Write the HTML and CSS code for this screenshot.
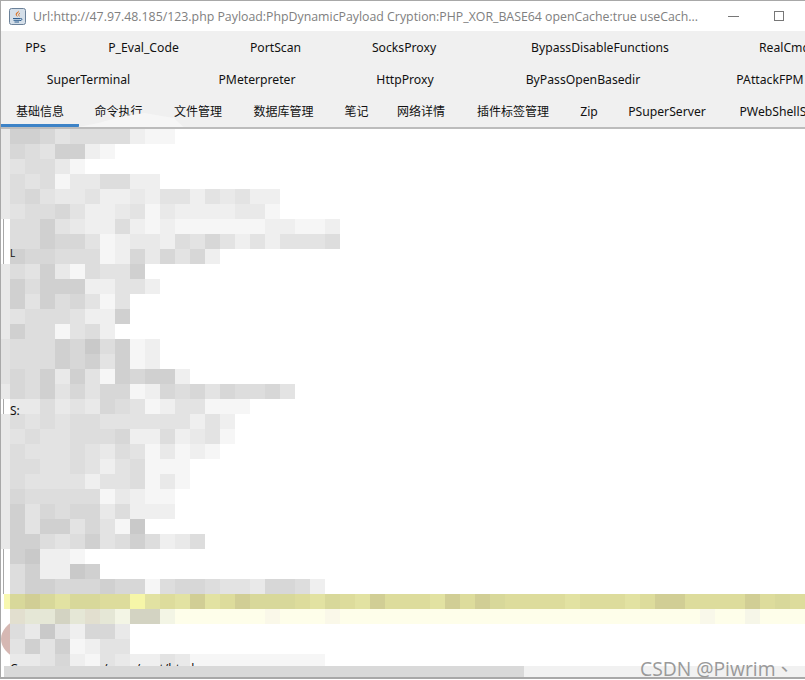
FILE: index.html
```html
<!DOCTYPE html>
<html lang="en">
<head>
    <meta charset="UTF-8">
    <title>Godzilla shell</title>
    <link rel="stylesheet" href="styles.css">
</head>
<body>
    <div class="window">
        <div class="title-bar">
            <svg class="java-icon" width="17" height="17" viewBox="0 0 17 17">
                <rect x="0.5" y="0.5" width="16" height="16" rx="2" fill="#d5dfe9" stroke="#6b8199"/>
                <path d="M9.5 2.5 C11 4.5 7 5.5 8 7.5 C8.4 8.4 9 8.6 9 9 C7 7.8 6 6.5 7 5.2 C7.8 4.2 9.6 3.8 9.5 2.5 Z" fill="#d9772b"/>
                <path d="M11 5 C9.5 6 9.2 6.8 10.4 8.4" fill="none" stroke="#d9772b"/>
                <path d="M4 10.5 H11.5 M4.5 12.3 H11 M5.5 14 H10 M11.5 10.5 C13.5 10 13.5 12.5 11 12.6" fill="none" stroke="#2f5f90"/>
            </svg>
            <div class="title-text">Url:http://47.97.48.185/123.php Payload:PhpDynamicPayload Cryption:PHP_XOR_BASE64 openCache:true useCach...</div>
            <div class="win-btn"><span class="win-min"></span></div>
            <div class="win-btn"><span class="win-max"></span></div>
        </div>

        <div class="tabs">
            <div class="tab-row row-one">
                <div class="tab">PPs</div>
                <div class="tab">P_Eval_Code</div>
                <div class="tab">PortScan</div>
                <div class="tab">SocksProxy</div>
                <div class="tab">BypassDisableFunctions</div>
                <div class="tab">RealCmd</div>
            </div>
            <div class="tab-row row-two">
                <div class="tab">SuperTerminal</div>
                <div class="tab">PMeterpreter</div>
                <div class="tab">HttpProxy</div>
                <div class="tab">ByPassOpenBasedir</div>
                <div class="tab">PAttackFPM</div>
            </div>
            <div class="tab-row row-three">
                <div class="tab zh active">基础信息</div>
                <div class="tab zh">命令执行</div>
                <div class="tab zh">文件管理</div>
                <div class="tab zh">数据库管理</div>
                <div class="tab zh">笔记</div>
                <div class="tab zh">网络详情</div>
                <div class="tab zh">插件标签管理</div>
                <div class="tab">Zip</div>
                <div class="tab">PSuperServer</div>
                <div class="tab">PWebShellScan</div>
            </div>
        </div>
        <div class="smudge"></div>

        <div class="content">
            <div class="blush"></div>
            <div class="mosaic">
                <div class="m"><i class="edge"></i><i class="g"></i><i class="g"></i><i class="f"></i><i class="d"></i><i class="e"></i><i class="e"></i><i class="e"></i><i class="e"></i><i class="b"></i><i class="a"></i><i class="a"></i></div>
                <div class="m"><i class="edge"></i><i class="f"></i><i class="e"></i><i class="d"></i><i class="g"></i><i class="g"></i><i class="b"></i><i class="a"></i></div>
                <div class="m"><i class="edge"></i><i class="d"></i><i class="e"></i><i class="e"></i><i class="c"></i><i class="a"></i></div>
                <div class="m"><i class="edge"></i><i class="e"></i><i class="d"></i><i class="e"></i><i class="a"></i><i class="c"></i><i class="c"></i><i class="e"></i><i class="e"></i><i class="b"></i><i class="b"></i></div>
                <div class="m"><i class="edge"></i><i class="e"></i><i class="f"></i><i class="d"></i><i class="c"></i><i class="c"></i><i class="d"></i><i class="b"></i><i class="b"></i><i class="c"></i><i class="b"></i><i class="d"></i><i class="d"></i><i class="b"></i><i class="d"></i><i class="c"></i><i class="d"></i><i class="b"></i><i class="b"></i></div>
                <div class="m"><i class="edge"></i><i class="d"></i><i class="e"></i><i class="e"></i><i class="f"></i><i class="d"></i><i class="b"></i><i class="b"></i><i class="c"></i><i class="d"></i><i class="a"></i><i class="c"></i><i class="b"></i><i class="b"></i><i class="b"></i><i class="b"></i><i class="c"></i><i class="c"></i><i class="a"></i></div>
                <div class="m"><i class="edge-white"></i><i class="e"></i><i class="e"></i><i class="g"></i><i class="d"></i><i class="c"></i><i class="b"></i><i class="b"></i><i class="e"></i><i class="b"></i><i class="a"></i><i class="b"></i><i class="a"></i><i class="a"></i><i class="a"></i><i class="a"></i><i class="a"></i><i class="a"></i><i class="b"></i><i class="b"></i><i class="a"></i><i class="a"></i><i class="b"></i></div>
                <div class="m"><i class="edge-white"></i><i class="e"></i><i class="e"></i><i class="g"></i><i class="f"></i><i class="f"></i><i class="d"></i><i class="a"></i><i class="b"></i><i class="c"></i><i class="c"></i><i class="b"></i><i class="e"></i><i class="d"></i><i class="f"></i><i class="d"></i><i class="b"></i><i class="d"></i><i class="b"></i><i class="d"></i><i class="d"></i><i class="d"></i><i class="e"></i></div>
                <div class="m"><i class="edge-white"></i><i class="g"></i><i class="f"></i><i class="f"></i><i class="e"></i><i class="e"></i><i class="e"></i><i class="a"></i><i class="b"></i><i class="f"></i><i class="c"></i><i class="f"></i><i class="d"></i><i class="f"></i><i class="b"></i></div>
                <div class="m"><i class="edge"></i><i class="e"></i><i class="d"></i><i class="g"></i><i class="c"></i><i class="a"></i><i class="e"></i><i class="d"></i><i class="d"></i><i class="g"></i></div>
                <div class="m"><i class="edge"></i><i class="g"></i><i class="e"></i><i class="g"></i><i class="g"></i><i class="g"></i><i class="b"></i><i class="b"></i><i class="d"></i><i class="d"></i><i class="b"></i></div>
                <div class="m"><i class="edge"></i><i class="g"></i><i class="d"></i><i class="g"></i><i class="e"></i><i class="f"></i><i class="d"></i><i class="a"></i><i class="d"></i></div>
                <div class="m"><i class="edge"></i><i class="d"></i><i class="e"></i><i class="e"></i><i class="e"></i><i class="d"></i><i class="b"></i><i class="b"></i><i class="g"></i></div>
                <div class="m"><i class="edge"></i><i class="g"></i><i class="e"></i><i class="e"></i><i class="a"></i><i class="d"></i><i class="e"></i><i class="b"></i></div>
                <div class="m"><i class="edge-dark"></i><i class="e"></i><i class="e"></i><i class="e"></i><i class="g"></i><i class="f"></i><i class="h"></i><i class="e"></i><i class="g"></i><i class="a"></i><i class="b"></i></div>
                <div class="m"><i class="edge-dark"></i><i class="e"></i><i class="e"></i><i class="e"></i><i class="g"></i><i class="f"></i><i class="g"></i><i class="d"></i><i class="g"></i><i class="a"></i><i class="b"></i></div>
                <div class="m"><i class="edge-dark"></i><i class="f"></i><i class="e"></i><i class="g"></i><i class="c"></i><i class="g"></i><i class="d"></i><i class="a"></i><i class="g"></i><i class="f"></i><i class="g"></i><i class="g"></i><i class="b"></i></div>
                <div class="m"><i class="edge"></i><i class="f"></i><i class="e"></i><i class="g"></i><i class="d"></i><i class="f"></i><i class="d"></i><i class="f"></i><i class="f"></i><i class="a"></i><i class="b"></i><i class="f"></i><i class="e"></i><i class="f"></i><i class="d"></i><i class="f"></i><i class="e"></i><i class="e"></i><i class="f"></i><i class="d"></i></div>
                <div class="m"><i class="edge-white"></i><i class="c"></i><i class="c"></i><i class="e"></i><i class="c"></i><i class="d"></i><i class="c"></i><i class="f"></i><i class="e"></i><i class="d"></i><i class="a"></i><i class="b"></i><i class="d"></i><i class="d"></i><i class="a"></i><i class="a"></i><i class="a"></i></div>
                <div class="m"><i class="edge"></i><i class="e"></i><i class="d"></i><i class="e"></i><i class="d"></i><i class="e"></i><i class="e"></i><i class="d"></i><i class="d"></i><i class="d"></i><i class="d"></i><i class="d"></i><i class="d"></i><i class="b"></i><i class="d"></i><i class="b"></i></div>
                <div class="m"><i class="edge"></i><i class="d"></i><i class="e"></i><i class="d"></i><i class="d"></i><i class="e"></i><i class="e"></i><i class="e"></i><i class="f"></i><i class="b"></i><i class="b"></i><i class="e"></i><i class="b"></i><i class="c"></i><i class="d"></i><i class="a"></i></div>
                <div class="m"><i class="edge"></i><i class="e"></i><i class="d"></i><i class="d"></i><i class="d"></i><i class="e"></i><i class="d"></i><i class="c"></i><i class="e"></i><i class="d"></i><i class="a"></i><i class="c"></i><i class="a"></i><i class="b"></i><i class="a"></i></div>
                <div class="m"><i class="edge"></i><i class="e"></i><i class="e"></i><i class="d"></i><i class="d"></i><i class="e"></i><i class="d"></i><i class="b"></i><i class="d"></i><i class="e"></i><i class="a"></i><i class="a"></i><i class="a"></i></div>
                <div class="m"><i class="edge"></i><i class="e"></i><i class="d"></i><i class="d"></i><i class="d"></i><i class="d"></i><i class="b"></i><i class="d"></i><i class="d"></i><i class="e"></i><i class="a"></i><i class="c"></i><i class="a"></i></div>
                <div class="m"><i class="edge"></i><i class="f"></i><i class="e"></i><i class="e"></i><i class="e"></i><i class="e"></i><i class="e"></i><i class="a"></i><i class="c"></i><i class="b"></i><i class="a"></i><i class="a"></i></div>
                <div class="m"><i class="edge"></i><i class="g"></i><i class="d"></i><i class="f"></i><i class="e"></i><i class="f"></i><i class="f"></i><i class="c"></i><i class="e"></i><i class="b"></i><i class="b"></i><i class="b"></i></div>
                <div class="m"><i class="edge"></i><i class="g"></i><i class="d"></i><i class="g"></i><i class="g"></i><i class="d"></i><i class="f"></i><i class="d"></i><i class="a"></i><i class="h"></i></div>
                <div class="m"><i class="edge"></i><i class="g"></i><i class="g"></i><i class="e"></i><i class="d"></i><i class="e"></i><i class="g"></i><i class="d"></i><i class="e"></i><i class="g"></i><i class="e"></i><i class="b"></i><i class="c"></i><i class="e"></i></div>
                <div class="m"><i class="edge-white"></i><i class="g"></i><i class="h"></i><i class="b"></i><i class="b"></i><i class="a"></i></div>
                <div class="m"><i class="edge-white"></i><i class="e"></i><i class="g"></i><i class="b"></i><i class="b"></i><i class="h"></i><i class="g"></i></div>
                <div class="m"><i class="edge-white"></i><i class="e"></i><i class="g"></i><i class="g"></i><i class="f"></i><i class="f"></i><i class="f"></i><i class="g"></i><i class="f"></i><i class="f"></i><i class="a"></i><i class="e"></i><i class="f"></i><i class="f"></i><i class="e"></i><i class="d"></i><i class="d"></i><i class="c"></i><i class="f"></i><i class="f"></i><i class="e"></i><i class="b"></i></div>
                <div class="m"><i class="edge-yellow"></i><i class="y3"></i><i class="y4"></i><i class="y3"></i><i class="y2"></i><i class="y3"></i><i class="y3"></i><i class="y5"></i><i class="y5"></i><i class="y1"></i><i class="y2"></i><i class="y5"></i><i class="y2"></i><i class="y4"></i><i class="y2"></i><i class="y5"></i><i class="y4"></i><i class="y3"></i><i class="y3"></i><i class="y3"></i><i class="y5"></i><i class="y2"></i><i class="y3"></i><i class="y5"></i><i class="y2"></i><i class="y4"></i><i class="y5"></i><i class="y5"></i><i class="y5"></i><i class="y2"></i><i class="y4"></i><i class="y5"></i><i class="y4"></i><i class="y3"></i><i class="y5"></i><i class="y5"></i><i class="y5"></i><i class="y5"></i><i class="y2"></i><i class="y5"></i><i class="y5"></i><i class="y5"></i><i class="y2"></i><i class="y5"></i><i class="y4"></i><i class="y4"></i><i class="y5"></i><i class="y5"></i><i class="y5"></i><i class="y5"></i><i class="y4"></i><i class="y5"></i><i class="y3"></i><i class="y5"></i></div>
                <div class="m"><i class="edge-none"></i><i class="q1"></i><i class="q2"></i><i class="q2"></i><i class="q3"></i><i class="q2"></i><i class="q1"></i><i class="q2"></i><i class="q4"></i><i class="q3"></i><i class="q3"></i><i class="q4"></i><i class="pale-fill"></i></div>
                <div class="m"><i class="edge-none"></i><i class="e"></i><i class="c"></i><i class="h"></i><i class="d"></i><i class="b"></i><i class="f"></i><i class="f"></i><i class="c"></i></div>
                <div class="m"><i class="edge-none"></i><i class="d"></i><i class="g"></i><i class="d"></i><i class="g"></i><i class="a"></i><i class="b"></i><i class="d"></i><i class="d"></i></div>
                <div class="m"><i class="edge-none"></i><i class="c"></i><i class="c"></i><i class="d"></i><i class="f"></i><i class="b"></i><i class="a"></i><i class="d"></i><i class="c"></i><i class="b"></i><i class="b"></i><i class="d"></i><i class="c"></i><i class="a"></i><i class="a"></i><i class="a"></i><i class="a"></i><i class="a"></i><i class="a"></i><i class="a"></i><i class="a"></i><i class="a"></i></div>
            </div>
            <span class="frag frag-l">L</span>
            <span class="frag frag-s">S:</span>
            <span class="frag frag-cur">Cur</span>
            <span class="frag frag-path">/www/root/html</span>
        </div>

        <div class="hscroll"><div class="hscroll-thumb"></div></div>
    </div>
    <div class="watermark">CSDN @Piwrim <span class="watermark-tick">、</span></div>
</body>
</html>
```

FILE: styles.css
```css
body {
    margin: 0;
    background-color: white;
    font-family: "Noto Sans", "Noto Sans CJK SC", sans-serif;
    overflow: hidden;
}
.window {
    position: relative;
    display: flex;
    flex-direction: column;
    width: 804px;
    height: 676px;
    border-top: 1px solid #a8a8a8;
    border-left: 1px solid #a8a8a8;
    border-bottom: 2px solid #a8a8a8;
    overflow: hidden;
}

/* title bar */
.title-bar {
    display: flex;
    align-items: center;
    flex: none;
    height: 30px;
    padding-left: 8px;
    background-color: white;
}
.java-icon {
    flex: none;
    margin-right: 7px;
}
.title-text {
    width: 678px;
    font-family: "Open Sans", sans-serif;
    font-size: 12.33px;
    color: #808080;
    white-space: nowrap;
}
.win-btn {
    display: flex;
    align-items: center;
    justify-content: center;
    flex: none;
    width: 45px;
    height: 30px;
}
.win-min {
    width: 11px;
    height: 1px;
    background-color: #777;
}
.win-max {
    width: 8px;
    height: 8px;
    border: 1px solid #777;
}

/* tabs */
.tabs {
    flex: none;
    background-color: #f0f0f0;
}
.tab-row {
    display: grid;
    height: 32px;
    font-size: 12.2px;
    color: #111;
    white-space: nowrap;
    overflow: hidden;
}
.row-one {
    grid-template-columns: 69px 147px 117px 140px 252px 117px;
}
.row-two {
    grid-template-columns: 175px 162px 134px 222px 152px;
}
.row-three {
    grid-template-columns: 78px 79px 80px 91px 55px 74px 110px 42px 114px 118px;
}
.tab {
    display: flex;
    align-items: center;
    justify-content: center;
}
.tab.zh {
    font-size: 12px;
}
.tab.active {
    box-shadow: inset 0 -3px 0 #3d83c7;
}
.smudge {
    position: absolute;
    left: 74px;
    top: 112px;
    width: 112px;
    height: 17px;
    background-color: #f6f6f6;
    clip-path: polygon(0 85%, 20% 60%, 42% 20%, 62% 0, 88% 30%, 100% 100%, 0 100%);
}

/* content */
.content {
    position: relative;
    flex: 1;
    border-top: 2px solid #bcbcbc;
    background-color: white;
    overflow: hidden;
}
.blush {
    position: absolute;
    left: 0;
    top: 480px;
    width: 120px;
    height: 60px;
    border-radius: 50%;
    background-color: #d6b8b3;
}
.mosaic {
    position: relative;
}
.m {
    display: flex;
    height: 15px;
}
.m i {
    flex: none;
    width: 15px;
    height: 15px;
}
.m i[class^="edge"] {
    width: 9px;
}
.m .pale-fill {
    flex: 1;
    background:
        linear-gradient(to right, transparent 90px, #faf8e9 90px, #faf8e9 105px, transparent 105px),
        linear-gradient(to right, transparent 150px, #faf8e9 150px, #faf8e9 165px, transparent 165px),
        linear-gradient(to right, transparent 525px, #f9f8ea 525px, #f9f8ea 540px, transparent 540px),
        linear-gradient(to right, transparent 570px, #f6f6e8 570px, #f6f6e8 585px, transparent 585px),
        #fefeea;
}
.m .edge { background-color: #e9e9e9; }
.m .edge-dark { background-color: #e2e2e2; }
.m .edge-white { background: linear-gradient(to right, transparent 2px, #a8a8a8 2px, #a8a8a8 3px, transparent 3px); }
.m .edge-yellow { background: linear-gradient(to right, white 3px, #f8f8b0 3px); }
.m .edge-none { background-color: transparent; }

.a { background-color: #f6f6f6; }
.b { background-color: #efefef; }
.c { background-color: #e9e9e9; }
.d { background-color: #e3e3e3; }
.e { background-color: #dddddd; }
.f { background-color: #d7d7d7; }
.g { background-color: #d0d0d0; }
.h { background-color: #c9c9c9; }

.y1 { background-color: #f6f6a8; }
.y2 { background-color: #e2e2a2; }
.y3 { background-color: #d8d89a; }
.y4 { background-color: #d1ce95; }
.y5 { background-color: #dddc9c; }

.q1 { background-color: #e2dfcf; }
.q2 { background-color: #e5e7d6; }
.q3 { background-color: #d3d3c2; }
.q4 { background-color: #f3f5e5; }

/* bits of text left showing around the mosaic */
.frag {
    position: absolute;
    font-size: 12px;
    line-height: 14px;
    color: #111;
}
.frag-l {
    left: 9px;
    top: 117px;
    font-size: 10px;
}
.frag-s {
    left: 9px;
    top: 275px;
}
.frag-cur {
    left: 9px;
    top: 533px;
}
.frag-path {
    left: 102px;
    top: 533px;
}

/* horizontal scrollbar */
.hscroll {
    flex: none;
    height: 11px;
    margin-left: 3px;
    background-color: #f1f1f1;
}
.hscroll-thumb {
    width: 520px;
    height: 11px;
    background-color: #d9d9d9;
}

.watermark {
    position: absolute;
    left: 640px;
    top: 648px;
    font-family: "Open Sans", sans-serif;
    font-size: 19.3px;
    color: #9a9a9a;
    white-space: nowrap;
}
.watermark-tick {
    font-size: 20px;
    font-family: "Noto Sans CJK SC", sans-serif;
    vertical-align: 5px;
}
```
